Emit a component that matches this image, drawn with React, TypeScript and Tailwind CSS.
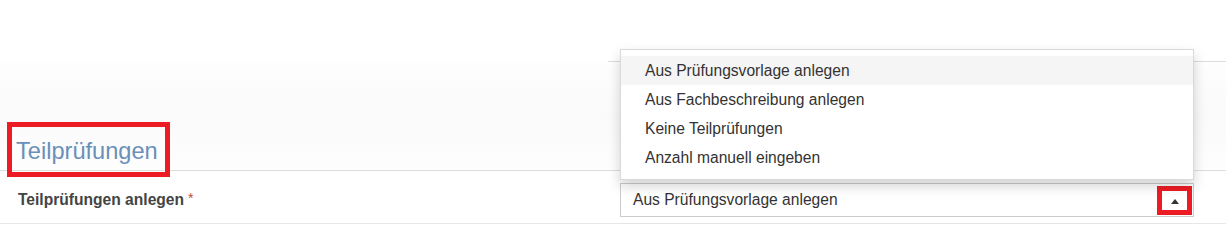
import React from "react";

const options = [
  "Aus Prüfungsvorlage anlegen",
  "Aus Fachbeschreibung anlegen",
  "Keine Teilprüfungen",
  "Anzahl manuell eingeben",
];

export default function App() {
  const selected = options[0];

  return (
    <div className="relative h-[225px] w-full overflow-hidden bg-white font-['Liberation_Sans',Arial,sans-serif] text-[15.6px] text-[#333]">
      {/* previous row */}
      <div className="flex h-[62px]">
        <div className="w-[608px]" />
        <div className="flex-1 border-b border-[#dcdcdc]" />
      </div>

      {/* section header */}
      <div className="flex h-[109px] items-end border-b border-[#dddddd] bg-gradient-to-b from-[#fefefe] via-[#fafafa] to-[#fefefe] pb-[4px] pl-[16px]">
        <div className="relative">
          <h2 className="text-[23.6px] leading-[30px] font-normal text-[#6a8fb9]">
            Teilprüfungen
          </h2>
          {/* annotation box */}
          <div className="absolute -left-[9px] -top-[14px] h-[55px] w-[163px] border-[5px] border-[#ed1c24]" />
        </div>
      </div>

      {/* form row */}
      <div className="flex h-[53px] border-b border-[#e6e6e6] pt-[12px]">
        <div className="flex h-[34px] w-[620px] items-center self-start pl-[18px]">
          <label className="font-bold text-[#444]">
            Teilprüfungen anlegen
            <span className="ml-[4px] align-top text-[14px] font-normal text-[#b94a48]">*</span>
          </label>
        </div>
        <div className="relative flex h-[34px] w-[574px] items-center border border-[#cccccc] bg-white pl-[12px]">
          <span>{selected}</span>
          <div className="absolute right-[1px] top-[2px] flex h-[29px] w-[35px] items-center justify-center border-[5px] border-[#ed1c24]">
            <svg width="8" height="5" viewBox="0 0 8 5" className="mt-[1px]">
              <path d="M0 5 L4 0 L8 5 Z" fill="#333" />
            </svg>
          </div>
        </div>
      </div>

      {/* open dropdown menu */}
      <ul className="absolute left-[620px] top-[49px] w-[574px] border border-[rgba(0,0,0,0.15)] bg-white pt-[6px] pb-[7px] shadow-[0_6px_12px_rgba(0,0,0,0.175)]">
        {options.map((opt) => (
          <li
            key={opt}
            className={`flex h-[29px] items-center pl-[24px] text-[#333] ${
              opt === selected ? "bg-[#f5f5f5]" : ""
            }`}
          >
            {opt}
          </li>
        ))}
      </ul>
    </div>
  );
}
